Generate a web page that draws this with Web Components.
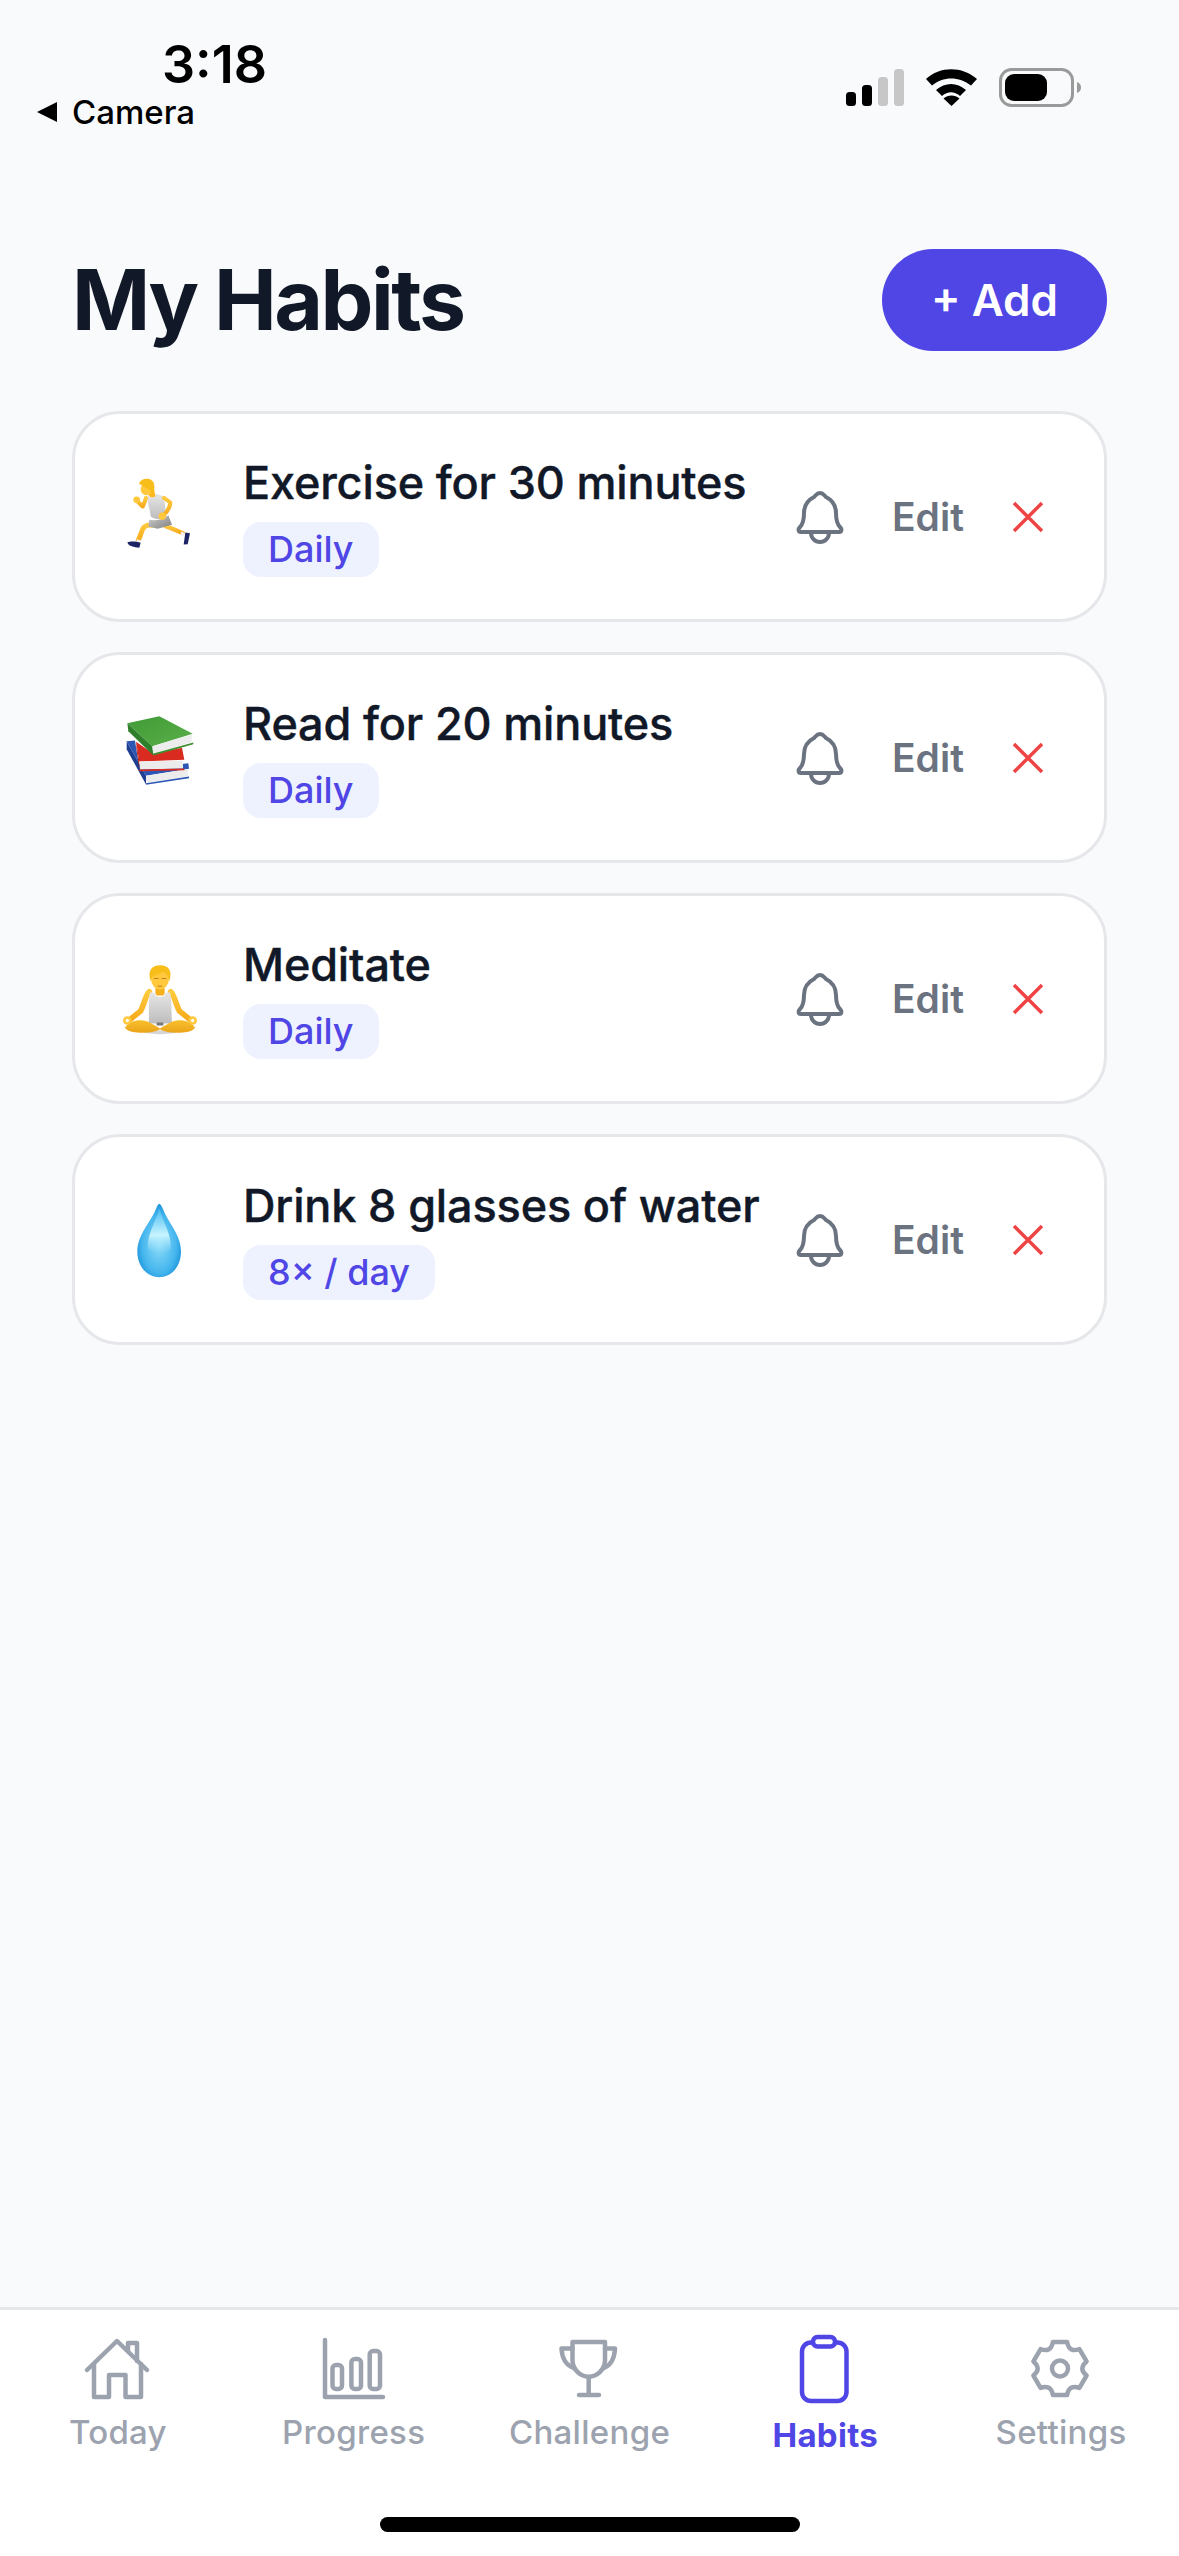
<!doctype html>
<html><head><meta charset="utf-8"><style>
html,body{margin:0;background:#f9fafb;}
body{width:1179px;height:2556px;overflow:hidden;font-family:Inter,"Noto Sans",sans-serif;}
</style></head><body>
<app-screen></app-screen>
<script>
function def(name,html){
  customElements.define(name,class extends HTMLElement{
    constructor(){super();this.attachShadow({mode:'open'}).innerHTML=typeof html==='function'?html(this):html;}
  });
}
def('status-bar',`<style>
:host{display:flex;height:135px;justify-content:space-between;align-items:flex-start;padding:0 93px 0 37px;box-sizing:border-box;color:#000}
.l{display:flex;flex-direction:column;padding-top:35px}
.t{font:600 52px/60px Inter,sans-serif;margin-left:125px}
.b{display:flex;align-items:center;gap:13px;font:500 33px/38px Inter,sans-serif;margin-top:-2px}
.r{padding-top:68px}
svg{display:block}
</style>
<div class="l"><div class="t">3:18</div><div class="b"><svg width="22" height="20" viewBox="0 0 22 20"><path d="M0 10 20 0V20Z" fill="#000"/></svg>Camera</div></div>
<div class="r"><svg width="240" height="40" viewBox="846 68 240 40">
<rect x="846" y="92" width="10" height="14" rx="3.5"/><rect x="862" y="85" width="10" height="21" rx="3.5"/>
<rect x="878" y="77" width="10" height="29" rx="3.5" fill="#c7c7c7"/><rect x="894" y="69" width="10" height="37" rx="3.5" fill="#c7c7c7"/>
<path d="M926 79C940 66 962 66 977 79L971 85.5C959 76 943 76 932 85.5ZM936 90C945 82 957 82 966 90L960 96C954 91 948 91 942 96ZM951.5 106 943.5 98.5C948 94.5 955 94.5 959.5 98.5Z"/>
<rect x="1000.5" y="69.5" width="72" height="36" rx="11" fill="none" stroke="#9a9a9a" stroke-width="3"/>
<rect x="1005" y="74" width="42" height="27" rx="9"/>
<path d="M1077 82c3 1 4 3 4 5.500s-1 4.500-4 5.500z" fill="#9a9a9a"/>
</svg></div>`);

def('add-button',`<style>
:host{display:flex;align-items:center;justify-content:center;width:225px;height:102px;border-radius:51px;background:#4f46e5;color:#fff;font:600 44px/1 Inter,sans-serif}
</style><slot></slot>`);

def('page-header',`<style>
:host{display:flex;justify-content:space-between;align-items:center;height:102px;margin-top:114px;padding:0 72px}
h1{margin:0;font:700 84px/102px Inter,sans-serif;color:#111827;letter-spacing:-2.5px}
</style><h1><slot></slot></h1><add-button>+ Add</add-button>`);

def('habit-list',`<style>:host{display:flex;flex-direction:column;gap:30px;margin-top:60px;padding:0 72px}</style><slot></slot>`);

const SKIN='url(#skin)';
const EMOJI={
run:{dy:-4.5,label:'🏃',g:`
<path d="M165 190C185 197 200 205 219 212" stroke="${SKIN}" stroke-width="13" fill="none" stroke-linecap="round"/>
<path d="M214 207 226 212 222 222 211 218Z" fill="#f2f2f2"/>
<path d="M226 210 240 212 233 245 221 246Z" fill="#1c2466"/>
<path d="M127 188C110 186 103 190 98 200L85 234" stroke="${SKIN}" stroke-width="15" fill="none" stroke-linecap="round"/>
<path d="M81 230 95 234 91 242 78 238Z" fill="#f2f2f2"/>
<path d="M52 240C62 235 78 237 92 241L88 256C72 253 56 252 52 240Z" fill="#1c2466"/>
<path d="M118 172C140 176 160 170 175 158L186 187 143 199 115 192Z" fill="url(#short)"/>
<path d="M112 100 141 94 161 102C166 120 165 145 170 165 155 172 135 172 122 162 121 145 112 125 112 100Z" fill="url(#shirt)"/>
<path d="M108 106C104 120 100 128 98 132L82 116" stroke="${SKIN}" stroke-width="12" fill="none" stroke-linecap="round" stroke-linejoin="round"/>
<circle cx="80" cy="112" r="10" fill="#ffc83d"/>
<path d="M162 106 181 120C180 135 172 148 160 158" stroke="${SKIN}" stroke-width="12" fill="none" stroke-linecap="round" stroke-linejoin="round"/>
<circle cx="157" cy="161" r="11" fill="#ffc83d"/>
<path d="M118 84 132 78 136 102C128 106 120 104 116 98Z" fill="#ffb81f"/>
<ellipse cx="109" cy="80" rx="17" ry="18" fill="#ffc83d"/>
<path d="M87 64C92 46 126 42 132 64 135 78 132 90 127 97L120 84C110 78 98 70 87 64Z" fill="#f7bd18"/>`},
book:{dy:-7.5,label:'📚',g:`
<path d="M50 122 75 120 88 205 235 188 237 205 108 226Z" fill="#2c56b4"/>
<path d="M50 122V146L108 252V226Z" fill="#1d3f91"/>
<path d="M108 226 233 206V227L110 247Z" fill="#ececec"/>
<path d="M108 248 237 228V233L108 253Z" fill="#2c56b4"/>
<path d="M78 124 130 160 216 142 223 178 88 183Z" fill="#d92b20"/>
<path d="M78 124 88 183V208L80 150Z" fill="#a91a12"/>
<path d="M88 183 219 180V204L90 207Z" fill="#ececec"/>
<path d="M88 207 223 204V209L88 212Z" fill="#d92b20"/>
<path d="M52 68 148 47 248 100 127 137Z" fill="url(#green)"/>
<path d="M52 68 127 137 130 165 55 92Z" fill="#2f7f2b"/>
<path d="M127 137 245 103V125L130 159Z" fill="#ededed"/>
<path d="M130 159 250 126V131L130 165Z" fill="#3f8f32"/>`},
med:{dy:4.5,label:'🧘',g:`
<path d="M118 115C105 128 104 150 92 172L58 200" stroke="${SKIN}" stroke-width="17" fill="none" stroke-linecap="round" stroke-linejoin="round"/>
<path d="M182 115C195 128 196 150 208 172L242 200" stroke="${SKIN}" stroke-width="17" fill="none" stroke-linecap="round" stroke-linejoin="round"/>
<path d="M120 117H132C136 135 164 135 168 117H180C186 140 184 180 186 210H116C118 180 114 140 120 117Z" fill="url(#shirt)"/>
<rect x="136" y="98" width="28" height="28" rx="10" fill="#f5b01e"/>
<rect x="140" y="207" width="20" height="9" fill="#777"/>
<ellipse cx="150" cy="236" rx="45" ry="6" fill="#d5d5d5"/>
<path d="M45 222C60 200 90 196 112 204 130 212 142 220 152 226 140 236 105 240 82 237 62 235 50 232 45 222Z" fill="url(#leg)"/>
<path d="M255 222C240 200 210 196 188 204 170 212 158 220 148 226 160 236 195 240 218 237 238 235 250 232 255 222Z" fill="url(#leg)"/>
<circle cx="52" cy="201" r="13" fill="#ffc83d"/><circle cx="248" cy="201" r="13" fill="#ffc83d"/>
<circle cx="52" cy="201" r="5" fill="#fff"/><circle cx="248" cy="201" r="5" fill="#fff"/>
<ellipse cx="150" cy="75" rx="27" ry="33" fill="#ffc83d"/>
<path d="M122 84C112 50 125 35 150 35 176 35 188 50 178 84 176 72 172 62 160 54 150 62 134 62 127 70 124 74 123 80 122 84Z" fill="#f7bd18"/>
<path d="M133 75h12M156 75h12M144 98h12" stroke="#b0741a" stroke-width="2.500" stroke-linecap="round"/>`},
drop:{dy:1.5,label:'💧',g:`
<path d="M148 37C151 37 155 44 160 55 175 95 213 130 213 180 213 225 185 257 148 257 111 257 82 225 82 180 82 130 122 92 137 54 141 44 145 37 148 37Z" fill="url(#water)"/>
<path d="M148 50C158 90 186 130 182 170 178 190 120 190 114 170 110 130 138 90 148 50Z" fill="url(#gloss)"/>`}
};
def('habit-emoji',h=>{const e=EMOJI[h.getAttribute('kind')];return `<style>:host{display:block;width:100px;height:100px;flex:none}svg{display:block}</style>
<svg viewBox="0 0 300 300" width="100" height="100" role="img" aria-label="${e.label}"><defs>
<linearGradient id="skin" x1="0" y1="0" x2="0" y2="1"><stop offset="0" stop-color="#ffca3d"/><stop offset="1" stop-color="#f5ab1c"/></linearGradient>
<linearGradient id="leg" x1="0" y1="0" x2="0" y2="1"><stop offset="0" stop-color="#f9bf2d"/><stop offset="1" stop-color="#eba41a"/></linearGradient>
<linearGradient id="shirt" x1="0" y1="0" x2="0" y2="1"><stop offset="0" stop-color="#e6e6e6"/><stop offset="1" stop-color="#bdbdbd"/></linearGradient>
<linearGradient id="short" x1="0" y1="0" x2="1" y2="1"><stop offset="0" stop-color="#d0d0d0"/><stop offset="1" stop-color="#7e7e7e"/></linearGradient>
<linearGradient id="green" x1="0" y1="0" x2="1" y2="1"><stop offset="0" stop-color="#3f9a35"/><stop offset="1" stop-color="#5cb04a"/></linearGradient>
<radialGradient id="water" cx=".5" cy=".55" r=".6"><stop offset="0" stop-color="#8fdcf9"/><stop offset=".65" stop-color="#45b6ee"/><stop offset="1" stop-color="#1089d4"/></radialGradient>
<linearGradient id="gloss" x1="0" y1="0" x2="0" y2="1"><stop offset="0" stop-color="#7fd8f8" stop-opacity=".3"/><stop offset=".6" stop-color="#c8f4ff"/><stop offset="1" stop-color="#9fe3fb" stop-opacity="0"/></linearGradient>
</defs><g transform="translate(0 ${e.dy*3})">${e.g}</g></svg>`});

def('habit-card',h=>`<style>
:host{display:flex;align-items:center;box-sizing:border-box;height:211px;background:#fff;border:3px solid #e5e7eb;border-radius:48px;padding-left:35px}
.info{flex:1;margin-left:33px;display:flex;flex-direction:column;align-items:flex-start}
.n{font:500 45px/54px Inter,sans-serif;color:#111827;letter-spacing:-.15px;-webkit-text-stroke:.4px #111827}
.tag{margin-top:12px;font:500 36px/55px Inter,sans-serif;color:#4f46e5;background:#eef2ff;border-radius:18px;padding:0 25px}
.edit{font:600 39px/1 Inter,sans-serif;color:#6b7280;width:72px;margin:0 46px 0 48px}
svg{display:block;flex:none}
</style>
<habit-emoji kind="${h.getAttribute('kind')}"></habit-emoji>
<div class="info"><div class="n">${h.getAttribute('name')}</div><div class="tag">${h.getAttribute('tag')}</div></div>
<svg width="48" height="56" viewBox="0 0 48 56" fill="none" stroke="#6b7280" stroke-width="4" stroke-linejoin="round"><path d="M24 4c3 0 4 2 6 4 6 3 10 8 10 16 0 8 1 11 4 14 2 2 2 5-1 5H5c-3 0-3-3-1-5 3-3 4-6 4-14 0-8 4-13 10-16 2-2 3-4 6-4z"/><path d="M15 44a9 9 0 0 0 18 0"/></svg>
<div class="edit">Edit</div>
<svg width="36" height="36" viewBox="0 0 36 36" stroke="#ef4444" stroke-width="3.5"><path d="M4 4 32 32M32 4 4 32"/></svg>
<div style="width:58px;flex:none"></div>`);

def('tab-item',h=>{const a=h.hasAttribute('active');return `<style>
:host{display:flex;flex-direction:column;align-items:center;flex:1;color:${a?'#4f46e5':'#9ca3af'};font:${a?'700':'500'} 33px/40px Inter,sans-serif;letter-spacing:.3px}
::slotted(svg){display:block;width:72px;height:72px}
.ic{height:${a?75:72}px;margin-bottom:7px}
</style><div class="ic"><slot name="i"></slot></div><slot></slot>`});

def('tab-bar',`<style>
:host{display:flex;box-sizing:border-box;position:absolute;left:0;right:0;bottom:0;height:249px;background:#fff;border-top:3px solid #e5e7eb;padding-top:23px}
.pill{position:absolute;left:380px;top:207px;width:420px;height:15px;border-radius:8px;background:#000}
.row{display:flex;width:100%;align-items:flex-start}
</style><div class="row"><slot></slot></div><div class="pill"></div>`);

function gear(){
  const c=[35,35.5],R=27.5,V=21,P=[];
  const pt=(a,r)=>[(c[0]+r*Math.cos(a*Math.PI/180)).toFixed(1),(c[1]+r*Math.sin(a*Math.PI/180)).toFixed(1)];
  let d='';
  for(let k=0;k<6;k++){
    const a=-90+60*k,p1=pt(a-15,R),p2=pt(a+15,R),q=pt(a+30,V-3),n=pt(a+45,R);
    d+=(k==0?`M${p1}`:'')+`L${p2}Q${q} ${n}`;
  }
  return d+'Z';
}
const S=(inner,c='#9ca3af',w=4.5)=>`<svg slot="i" viewBox="0 0 72 72" fill="none" stroke="${c}" stroke-width="${w}" stroke-linecap="round" stroke-linejoin="round">${inner}</svg>`;
const ICONS={
today:S(`<path d="M5 37 35 8 65 37"/><path d="M12 31V64H27V42H43.500V64H59V31"/><path d="M46 18V10H55V28"/>`),
progress:S(`<path d="M7 7V64H65"/><rect x="14.500" y="32" width="9.500" height="24" rx="3.500"/><rect x="33.400" y="26" width="9.600" height="30" rx="3.500"/><rect x="51.700" y="18" width="10.300" height="38" rx="3.500"/>`),
challenge:S(`<path d="M19.500 9H52V28A16.300 17 0 0 1 19.500 28Z"/><path d="M19.500 15.500H8.500C9 26 13 32 20.500 35"/><path d="M52 15.500H62C61.500 26 58 32 51 35"/><path d="M35.700 45V62M26 62H46"/>`),
habits:S(`<rect x="13" y="9.500" width="44.500" height="58.500" rx="9"/><rect x="24" y="4" width="22" height="9.500" rx="4.500" fill="#fff"/>`,'#4f46e5'),
settings:S(`<path d="${gear()}"/><circle cx="35" cy="35.500" r="8"/>`)
};
def('app-screen',`<style>:host{display:block;position:relative;width:1179px;height:2556px;background:#f9fafb}</style>
<status-bar></status-bar>
<page-header>My Habits</page-header>
<habit-list>
<habit-card kind="run" name="Exercise for 30 minutes" tag="Daily"></habit-card>
<habit-card kind="book" name="Read for 20 minutes" tag="Daily"></habit-card>
<habit-card kind="med" name="Meditate" tag="Daily"></habit-card>
<habit-card kind="drop" name="Drink 8 glasses of water" tag="8× / day"></habit-card>
</habit-list>
<tab-bar>
<tab-item>${ICONS.today}Today</tab-item><tab-item>${ICONS.progress}Progress</tab-item><tab-item>${ICONS.challenge}Challenge</tab-item><tab-item active>${ICONS.habits}Habits</tab-item><tab-item>${ICONS.settings}Settings</tab-item>
</tab-bar>`);
</script></body></html>
